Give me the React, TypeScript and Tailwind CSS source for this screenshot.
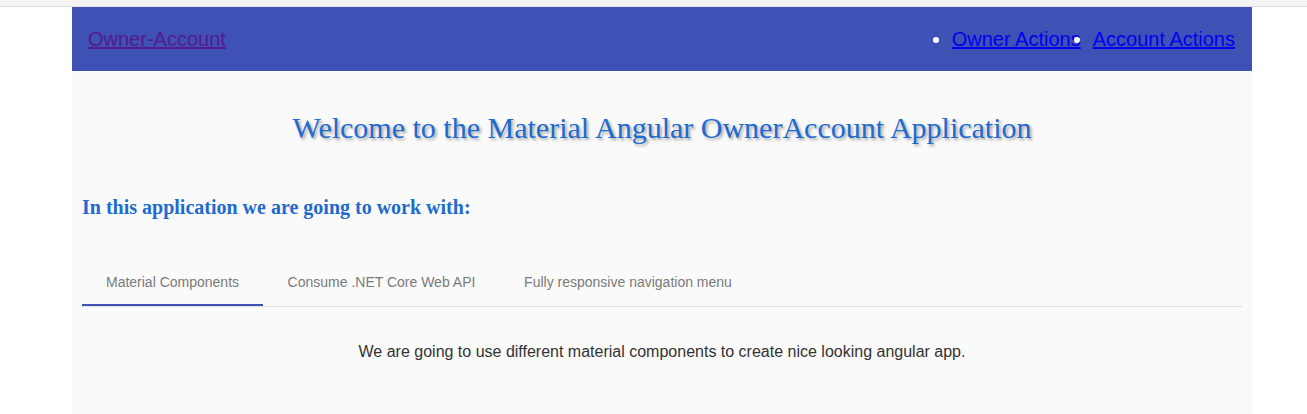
const tabs = [
  { label: "Material Components", width: "w-[181px]", active: true },
  { label: "Consume .NET Core Web API", width: "w-[237px]", active: false },
  { label: "Fully responsive navigation menu", width: "w-[256px]", active: false },
];

export default function App() {
  return (
    <div className="min-h-[414px] bg-white font-['Liberation_Sans',Arial,sans-serif]">
      <div className="h-[7px] border-b border-[#dedede] bg-[#f3f3f3]" />
      <div className="ml-[72px] w-[1180px]">
        <header className="flex h-16 items-center justify-between bg-[#3f51b5] pl-4 pr-[17px] text-[20px] text-white">
          <a href="#" className="text-[#551a8b] underline">
            Owner-Account
          </a>
          <ul className="flex list-disc gap-3 marker:text-white">
            <li>
              <a href="#" className="text-[#0000ee] underline">
                Owner Actions
              </a>
            </li>
            <li>
              <a href="#" className="text-[#0000ee] underline">
                Account Actions
              </a>
            </li>
          </ul>
        </header>

        <main className="h-[343px] bg-[#fafafa] px-[10px]">
          <h1 className="pt-[39px] text-center font-['Liberation_Serif','Times_New_Roman',serif] text-[30px] leading-9 text-[#1e6bd0] [text-shadow:2px_2px_3px_rgba(0,0,0,0.35)]">
            Welcome to the Material Angular OwnerAccount Application
          </h1>
          <h3 className="mt-[50px] font-['Liberation_Serif','Times_New_Roman',serif] text-[20px] font-bold leading-[22px] text-[#1e6bd0]">
            In this application we are going to work with:
          </h3>

          <div className="mt-10">
            <div className="flex border-b border-[#e0e0e0]">
              {tabs.map((tab) => (
                <div
                  key={tab.label}
                  className={`flex h-12 items-center justify-center text-sm text-[#7a7a7a] ${tab.width} ${
                    tab.active ? "border-b-2 border-[#3f51b5] pt-[2px]" : ""
                  }`}
                >
                  {tab.label}
                </div>
              ))}
            </div>
            <p className="mt-[35px] text-center text-base leading-5 text-[#333]">
              We are going to use different material components to create nice looking angular app.
            </p>
          </div>
        </main>
      </div>
    </div>
  );
}
